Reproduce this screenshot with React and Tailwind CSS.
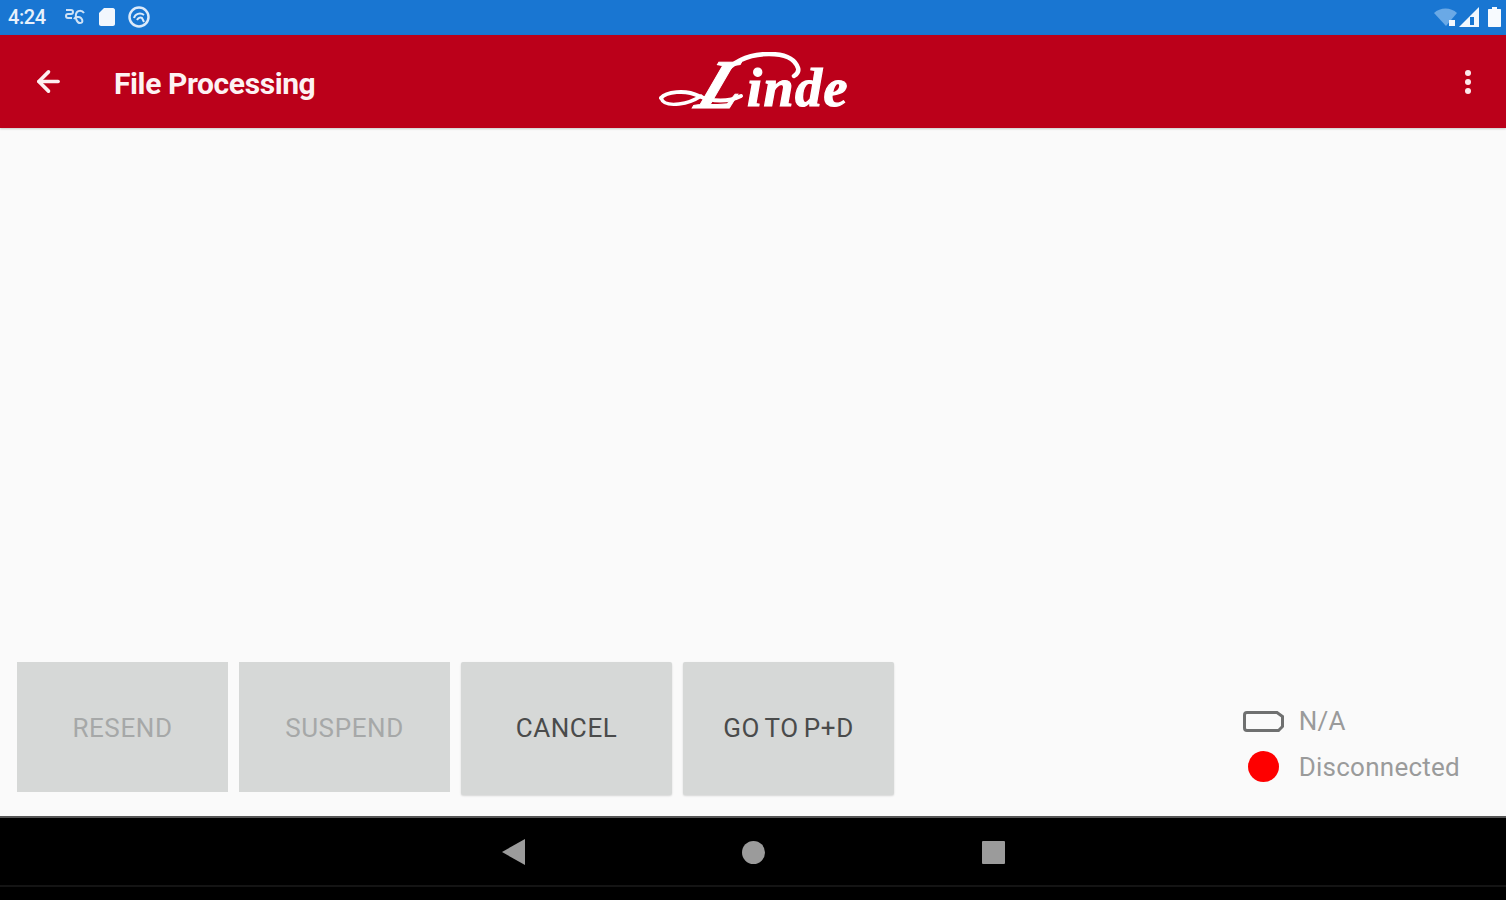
import React from "react";
import { ArrowLeft } from "lucide-react";

const font = { fontFamily: "Roboto, sans-serif" };

function StatusLeft() {
  return (
    <div className="flex items-center">
      <span className="ml-[8px] w-[40px] text-[20px] font-medium leading-none tracking-[-0.4px] text-[#e8f1fb]">4:24</span>
      <svg className="ml-[16px]" width="22" height="20" viewBox="0 0 22 20" fill="none" stroke="#cfe2f6" strokeWidth="2">
        <path d="M2 3h5c1 0 2 1 2 2s-1 2-2 2H4c-1 0-2 1-2 2s1 2 2 2h4" />
        <path d="M20 6c-2-3-7-3-8 1s1 9 4 9 3-3 1-5-6-1-7 1" />
      </svg>
      <svg className="ml-[12px]" width="18" height="20" viewBox="0 0 18 20" fill="#f2f7fd">
        <path d="M6 1h9c1 0 2 1 2 2v14c0 1-1 2-2 2H3c-1 0-2-1-2-2V6z" />
      </svg>
      <svg className="ml-[11px]" width="24" height="24" viewBox="0 0 24 24" fill="none" stroke="#dceafa">
        <circle cx="12" cy="12" r="9.5" strokeWidth="2.5" />
        <path d="M7 13c1-4 6-6 10-3M10 15c1-2 3-3 5-2l2 4" strokeWidth="2" />
      </svg>
    </div>
  );
}

function StatusRight() {
  return (
    <div className="flex items-center">
      <svg width="23" height="18" viewBox="0 0 23 18">
        <path d="M0 5C6-1 17-1 23 5L12 18Z" fill="#6aa9e6" />
        <rect x="15" y="12" width="6" height="6" fill="#f2f7fd" />
      </svg>
      <svg className="ml-[2px]" width="20" height="20" viewBox="0 0 20 20">
        <path d="M0 20 20 0v20Z" fill="#f2f7fd" />
        <rect x="11" y="10" width="4" height="8" fill="#1976d2" />
      </svg>
      <svg className="ml-[9px] mr-[5px]" width="13" height="20" viewBox="0 0 13 20">
        <path d="M4 0h5v2h3c.6 0 1 .4 1 1v16c0 .6-.4 1-1 1H1c-.6 0-1-.4-1-1V3c0-.6.4-1 1-1h3Z" fill="#f7fafe" />
      </svg>
    </div>
  );
}

function LindeLogo() {
  const serif = { fontFamily: '"Liberation Serif", serif' };
  return (
    <div className="relative h-[60px] w-[192px]">
      <svg className="absolute inset-0" width="192" height="60" viewBox="0 0 192 60" fill="none" stroke="#fff" strokeLinecap="round">
        <path d="M66 22C76 10 92 2 112 2c16 0 26 5 29 14 1 3-1 6-4 8" strokeWidth="4.500" />
        <path d="M4 46c5-6 24-9 38-2 13 6 30 6 42 0" strokeWidth="4" />
        <path d="M4 46c2 6 10 7 18 6 8-1 16-4 22-8" strokeWidth="3.500" />
      </svg>
      <span className="absolute left-[45px] top-[-2px] skew-x-[-22deg] text-[70px] font-bold italic leading-none text-white [-webkit-text-stroke:1px_white]" style={serif}>
        L
      </span>
      <span className="absolute left-[90px] top-[9px] text-[54px] font-bold italic leading-none tracking-[1.5px] text-white [-webkit-text-stroke:1.2px_white]" style={serif}>
        inde
      </span>
    </div>
  );
}

function ActionButton({ label, disabled, tall }) {
  return (
    <button
      className={`flex w-[211px] items-center justify-center bg-[#d6d8d7] text-[26px] leading-none tracking-[0.6px] [word-spacing:-2px] ${tall ? "h-[133px] rounded-[2px] pb-[1px] shadow-[0_1px_2px_rgba(0,0,0,0.15)]" : "h-[130px] pt-[2px]"} ${disabled ? "text-[#a6a8a8]" : "text-[#4a4b4b]"}`}
    >
      {label}
    </button>
  );
}

export default function App() {
  return (
    <div className="flex h-[900px] w-[1506px] flex-col overflow-hidden bg-[#fafafa]" style={font}>
      <div className="flex h-[35px] shrink-0 items-center justify-between bg-[#1976d2] pb-[1px]">
        <StatusLeft />
        <StatusRight />
      </div>
      <header className="flex h-[93px] shrink-0 items-center justify-between bg-[#bb001a] shadow-[0_1px_2px_rgba(0,0,0,0.2)]">
        <div className="flex w-[340px] items-center">
          <ArrowLeft className="ml-[32px] text-[#fdeef0]" size={33} strokeWidth={2.6} />
          <h1 className="ml-[49px] mt-[5px] text-[30px] font-bold leading-none tracking-[-0.4px] text-[#fdf2f3]">File Processing</h1>
        </div>
        <LindeLogo />
        <div className="flex w-[340px] flex-col items-end gap-[3px] pr-[35px]">
          <span className="h-[6px] w-[6px] rounded-full bg-[#fde9ec]" />
          <span className="h-[6px] w-[6px] rounded-full bg-[#fde9ec]" />
          <span className="h-[6px] w-[6px] rounded-full bg-[#fde9ec]" />
        </div>
      </header>
      <main className="flex flex-1 items-start justify-between pl-[17px] pt-[534px]">
        <div className="flex gap-[11px]">
          <ActionButton label="RESEND" disabled />
          <ActionButton label="SUSPEND" disabled />
          <ActionButton label="CANCEL" tall />
          <ActionButton label="GO TO P+D" tall />
        </div>
        <div className="mr-[46px] mt-[43px] flex flex-col text-[26px] leading-none tracking-[0.25px] text-[#9a9b9b]">
          <div className="flex h-[32px] items-center">
            <svg className="mr-[15px]" width="41" height="21" viewBox="0 0 41 21" fill="none">
              <path d="M4 1.5h30l5.5 4v10l-4 4H4c-1.4 0-2.500-1.100-2.500-2.500v-13C1.500 2.600 2.600 1.500 4 1.500Z" stroke="#6f7070" strokeWidth="3" />
            </svg>
            <span>N/A</span>
          </div>
          <div className="mt-[14px] flex h-[32px] items-center">
            <span className="ml-[5px] mr-[20px] mt-[-2px] h-[31px] w-[31px] rounded-full bg-[#fe0000]" />
            <span>Disconnected</span>
          </div>
        </div>
      </main>
      <nav className="relative flex h-[84px] shrink-0 items-start justify-center border-t-2 border-[#555] bg-black pt-[21px]">
        <div className="flex w-[503px] items-center justify-between">
          <svg width="23" height="26" viewBox="0 0 23 26"><path d="M23 0v26L0 13Z" fill="#9b9b9b" /></svg>
          <span className="h-[23px] w-[23px] rounded-full bg-[#9b9b9b]" />
          <span className="h-[23px] w-[23px] rounded-[1px] bg-[#9b9b9b]" />
        </div>
        <div className="absolute bottom-[13px] left-0 right-0 h-[2px] bg-[#141414]" />
      </nav>
    </div>
  );
}
